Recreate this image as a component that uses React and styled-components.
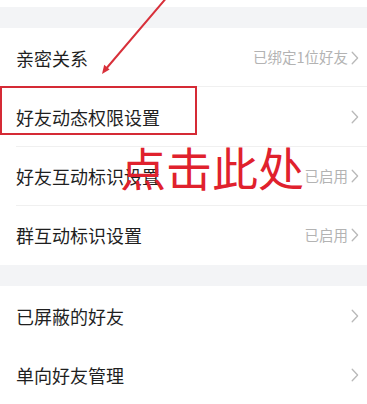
import React from 'react';
import styled, { createGlobalStyle } from 'styled-components';

const GlobalStyle = createGlobalStyle`
  html, body {
    margin: 0;
    padding: 0;
    background: #fff;
  }
  body {
    font-family: "Noto Sans CJK SC", "Noto Sans", sans-serif;
    -webkit-font-smoothing: antialiased;
  }
`;

const sections = [
  [
    { label: '亲密关系', value: '已绑定1位好友' },
    { label: '好友动态权限设置' },
    { label: '好友互动标识设置', value: '已启用' },
    { label: '群互动标识设置', value: '已启用' },
  ],
  [
    { label: '已屏蔽的好友', plain: true },
    { label: '单向好友管理', plain: true },
  ],
];

export default function App() {
  return (
    <>
      <GlobalStyle />
      <Page>
        <TopTail />
        {sections.map((rows, i) => (
          <React.Fragment key={i}>
            <GroupGap />
            <Section>
              {rows.map((row, j) => (
                <Row key={row.label} divider={!row.plain && j < rows.length - 1}>
                  <Label>{row.label}</Label>
                  <Trail>
                    {row.value && <Value>{row.value}</Value>}
                    <Chevron />
                  </Trail>
                </Row>
              ))}
            </Section>
          </React.Fragment>
        ))}

        {/* annotation overlays */}
        <Arrow />
        <Highlight />
        <Callout>点击此处</Callout>
      </Page>
    </>
  );
}

function Chevron() {
  return (
    <ChevronSvg viewBox="0 0 8 14" aria-hidden="true">
      <path d="M1.2 1.2 L6.6 7 L1.2 12.8" fill="none" stroke="#b9b9b9" strokeWidth="1.3" strokeLinecap="round" strokeLinejoin="round" />
    </ChevronSvg>
  );
}

function Arrow() {
  return (
    <ArrowSvg viewBox="0 0 367 404" aria-hidden="true">
      <line x1="168" y1="-4" x2="105" y2="70" stroke="#d8303a" strokeWidth="2" strokeLinecap="round" />
      <path d="M102 74 L104.2 64.8 L109.6 69.4 Z" fill="#d8303a" />
    </ArrowSvg>
  );
}

const Page = styled.div`
  position: relative;
  width: 367px;
  height: 404px;
  overflow: hidden;
  background: #fff;
`;

const TopTail = styled.div`
  height: 7px;
  background: #fff;
`;

const GroupGap = styled.div`
  height: 21px;
  background: #f3f4f6;
`;

const Section = styled.div`
  background: #fff;
`;

const Row = styled.div`
  position: relative;
  display: flex;
  align-items: center;
  justify-content: space-between;
  height: 59.25px;
  padding: 0 8px 0 16px;
  box-sizing: border-box;

  &::after {
    content: '';
    display: ${(p) => (p.divider ? 'block' : 'none')};
    position: absolute;
    left: 16px;
    right: 0;
    bottom: 0;
    height: 1px;
    background: #f0f0f0;
  }
`;

const Label = styled.span`
  font-size: 18px;
  color: #1f1f1f;
  line-height: 1;
`;

const Trail = styled.div`
  display: flex;
  align-items: center;
  gap: 3px;
`;

const Value = styled.span`
  font-size: 14.5px;
  color: #b3b3b3;
  line-height: 1;
`;

const ChevronSvg = styled.svg`
  width: 8px;
  height: 14px;
  display: block;
`;

const ArrowSvg = styled.svg`
  position: absolute;
  inset: 0;
  width: 367px;
  height: 404px;
  pointer-events: none;
`;

const Highlight = styled.div`
  position: absolute;
  left: 0;
  top: 86px;
  width: 197px;
  height: 49px;
  box-sizing: border-box;
  border: 2px solid #d52a35;
  pointer-events: none;
`;

const Callout = styled.div`
  position: absolute;
  left: 120px;
  top: 143px;
  font-size: 46px;
  line-height: 1;
  color: #e0212d;
  white-space: nowrap;
  pointer-events: none;
`;
